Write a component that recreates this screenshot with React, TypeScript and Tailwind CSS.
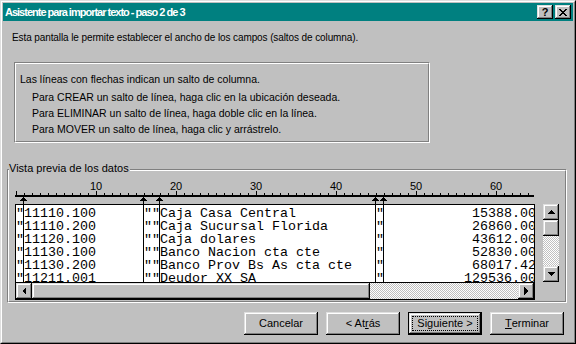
import React from 'react';

const raised =
  'bg-[#c0c0c0] shadow-[inset_-1px_-1px_#000000,inset_1px_1px_#dfdfdf,inset_-2px_-2px_#808080,inset_2px_2px_#ffffff]';
const dither =
  'bg-[image:repeating-conic-gradient(#c0c0c0_0_25%,#ffffff_0_50%)] bg-[length:2px_2px]';

const rows = [
  ['11110.100', 'Caja Casa Central', '15388.00'],
  ['11110.200', 'Caja Sucursal Florida', '26860.00'],
  ['11120.100', 'Caja dolares', '43612.00'],
  ['11130.100', 'Banco Nacion cta cte', '52830.00'],
  ['11130.200', 'Banco Prov Bs As cta cte', '68017.42'],
  ['11211.001', 'Deudor XX SA', '129536.00'],
];

// column breaks, in characters
const breaks = [1, 16, 18, 45, 46];

function Arrow({ dir }: { dir: 'up' | 'down' | 'left' | 'right' }) {
  const pts = {
    up: '4,1 0,5 8,5',
    down: '0,1 8,1 4,5',
    left: '5,0 5,8 1,4',
    right: '1,0 1,8 5,4',
  }[dir];
  const vert = dir === 'up' || dir === 'down';
  return (
    <svg width={vert ? 8 : 6} height={vert ? 6 : 8} viewBox={vert ? '0 0 8 6' : '0 0 6 8'} shapeRendering="crispEdges">
      <polygon points={pts} fill="#000" />
    </svg>
  );
}

function ScrollBtn({ dir }: { dir: 'up' | 'down' | 'left' | 'right' }) {
  return (
    <div className={`${raised} w-[16px] h-[16px] shrink-0 flex items-center justify-center`}>
      <Arrow dir={dir} />
    </div>
  );
}

function Ruler() {
  const ticks = [];
  for (let c = 0; c <= 64; c++) {
    const x = 1 + c * 8;
    const major = c % 10 === 0;
    ticks.push(<rect key={c} x={x} y={major ? 11 : 13} width={1} height={major ? 5 : 3} fill="#000" />);
  }
  return (
    <svg width={521} height={24} className="block" shapeRendering="crispEdges">
      {ticks}
      <rect x={0} y={15} width={519} height={2} fill="#000" />
      {[10, 20, 30, 40, 50, 60].map((n) => (
        <text key={n} x={1 + n * 8} y={10} textAnchor="middle" fontSize={11} fontFamily="Liberation Sans, Arial, sans-serif" fill="#000">
          {n}
        </text>
      ))}
      {breaks.map((b) => {
        const x = b * 8 + 0.5;
        return <polygon key={b} points={`${x},17 ${x - 3.5},21 ${x + 3.5},21`} fill="#000" />;
      })}
    </svg>
  );
}

function Button({ children, def }: { children: React.ReactNode; def?: boolean }) {
  if (def) {
    return (
      <div className="w-[74px] h-[23px] border border-black">
        <div className={`${raised} w-full h-full flex items-center justify-center p-[3px]`}>
          <div className="w-full h-full border border-dotted border-black flex items-center justify-center">
            {children}
          </div>
        </div>
      </div>
    );
  }
  return <div className={`${raised} w-[74px] h-[23px] flex items-center justify-center`}>{children}</div>;
}

export default function App() {
  return (
    <div className="w-[576px] h-[344px] bg-[#c0c0c0] border border-t-[#dfdfdf] border-l-[#dfdfdf] border-r-black border-b-black font-['Liberation_Sans',Arial,sans-serif] text-[11px] text-black">
      <div className="h-full border border-t-white border-l-white border-r-[#808080] border-b-[#808080] p-px flex flex-col">
        {/* title bar */}
        <div className="h-[18px] bg-[#008080] flex items-center pl-[2px] pr-[2px] shrink-0">
          <span className="text-white font-bold leading-[13px] tracking-[-1px] flex-1">Asistente para importar texto - paso 2 de 3</span>
          <div className={`${raised} w-[16px] h-[14px] flex items-center justify-center font-bold text-[11px] leading-none`}>?</div>
          <div className={`${raised} w-[16px] h-[14px] ml-[2px] flex items-center justify-center`}>
            <svg width={8} height={7} viewBox="0 0 8 7" shapeRendering="crispEdges">
              <path d="M0 0h2v1h-2zM6 0h2v1h-2zM1 1h2v1h-2zM5 1h2v1h-2zM2 2h4v1h-4zM3 3h2v1h-2zM2 4h4v1h-4zM1 5h2v1h-2zM5 5h2v1h-2zM0 6h2v1h-2zM6 6h2v1h-2z" fill="#000" />
            </svg>
          </div>
        </div>

        <p className="ml-[9px] mt-[10px] leading-[13px] text-[10px] tracking-[-0.1px]">
          Esta pantalla le permite establecer el ancho de los campos (saltos de columna).
        </p>

        {/* instructions box */}
        <div className="ml-[11px] mt-[18px] w-[416px] h-[81px] border border-t-[#808080] border-l-[#808080] border-r-white border-b-white">
          <div className="h-full border border-t-white border-l-white border-r-[#808080] border-b-[#808080] pl-[4px] pt-[7px] leading-[16px] text-[10.5px]">
            <div className="mb-[2px]">Las líneas con flechas indican un salto de columna.</div>
            <div className="pl-[12px]">Para CREAR un salto de línea, haga clic en la ubicación deseada.</div>
            <div className="pl-[12px]">Para ELIMINAR un salto de línea, haga doble clic en la línea.</div>
            <div className="pl-[12px]">Para MOVER un salto de línea, haga clic y arrástrelo.</div>
          </div>
        </div>

        {/* preview group */}
        <div className="relative ml-[4px] mt-[26px] w-[560px] border border-t-[#808080] border-l-[#808080] border-r-white border-b-white">
          <span className="absolute -top-[8px] left-[1px] bg-[#c0c0c0] pr-[1px] leading-[13px]">Vista previa de los datos</span>
          <div className="border border-t-white border-l-white border-r-[#808080] border-b-[#808080] pl-[6px] pt-[9px] pb-[1px] flex gap-[7px]">
            <div className="relative">
              <Ruler />
              <div className="w-[520px] border border-black">
                <div className="h-[78px] bg-white border-b border-black overflow-hidden pt-[2px] font-['Liberation_Mono','Courier_New',monospace] text-[13.333px] leading-[13px] whitespace-pre">
                  {rows.map(([code, desc, amt]) => (
                    <div key={code}>{'"' + code.padEnd(15) + '""' + desc.padEnd(27) + '"' + amt.padStart(19)}</div>
                  ))}
                </div>
                <div className="h-[16px] flex">
                  <ScrollBtn dir="left" />
                  <div className={`${raised} w-[338px] h-[16px]`} />
                  <div className={`${dither} flex-1`} />
                  <ScrollBtn dir="right" />
                </div>
              </div>
              {breaks.map((b) => (
                <div key={b} className="absolute top-[21px] h-[81px] w-px bg-black" style={{ left: b * 8 }} />
              ))}
            </div>
            <div className="mt-[24px] w-[16px] h-[78px] flex flex-col">
              <ScrollBtn dir="up" />
              <div className={`${raised} h-[16px]`} />
              <div className={`${dither} flex-1`} />
              <ScrollBtn dir="down" />
            </div>
          </div>
        </div>

        {/* buttons */}
        <div className="mt-[9px] flex justify-end gap-[8px] pr-[9px]">
          <Button>Cancelar</Button>
          <Button>
            &lt; At<u>r</u>ás
          </Button>
          <Button def>Siguiente &gt;</Button>
          <Button>
            <u>T</u>erminar
          </Button>
        </div>
      </div>
    </div>
  );
}
